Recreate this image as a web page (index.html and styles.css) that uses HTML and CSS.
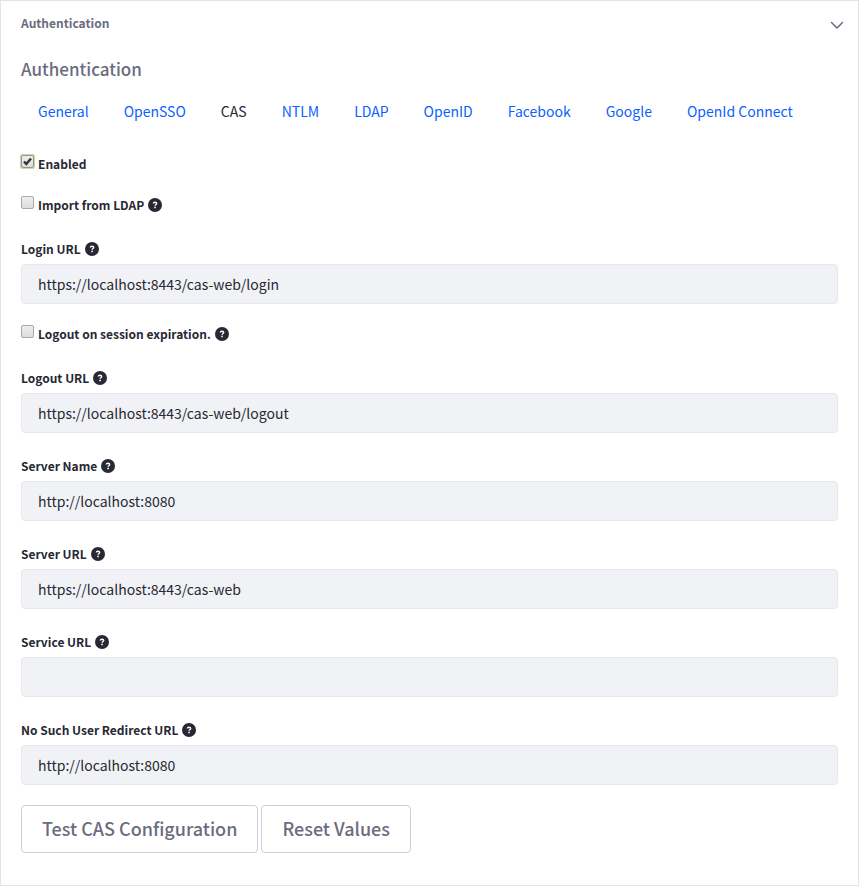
FILE: index.html
```html
<!DOCTYPE html>
<html lang="en">
<head>
<meta charset="utf-8">
<title>Authentication</title>
<link rel="stylesheet" href="styles.css">
</head>
<body>
<svg class="sprite" aria-hidden="true">
  <symbol id="help" viewBox="0 0 14 14">
    <circle cx="7" cy="7" r="7" fill="#272833"/>
    <path d="M5.300 5.500C5.400 4.600 6 4.200 7 4.200s1.700.5 1.700 1.300C8.700 6.500 7.100 6.600 7.100 7.800" fill="none" stroke="#fff" stroke-width="1.400"/>
    <circle cx="7.050" cy="9.400" r=".85" fill="#fff"/>
  </symbol>
</svg>
<main class="panel">
  <button class="panel-header" type="button" aria-expanded="true">
    <span>Authentication</span>
    <svg class="chevron" viewBox="0 0 14 8" aria-hidden="true"><path d="M1.500 1.500 7 7 12.500 1.500" fill="none" stroke="#6b6c7e" stroke-width="1.500" stroke-linecap="round" stroke-linejoin="round"/></svg>
  </button>
  <h1 class="title">Authentication</h1>
  <nav class="tabs">
    <a href="#">General</a>
    <a href="#">OpenSSO</a>
    <a href="#" class="active" aria-current="page">CAS</a>
    <a href="#">NTLM</a>
    <a href="#">LDAP</a>
    <a href="#">OpenID</a>
    <a href="#">Facebook</a>
    <a href="#">Google</a>
    <a href="#">OpenId Connect</a>
  </nav>
  <form>
    <div class="check">
      <input type="checkbox" id="enabled" class="highlighted" checked>
      <label for="enabled">Enabled</label>
    </div>
    <div class="check">
      <input type="checkbox" id="import">
      <label for="import">Import from LDAP</label>
      <svg class="help"><use href="#help"/></svg>
    </div>
    <div class="field">
      <div class="caption"><label for="login">Login URL</label><svg class="help"><use href="#help"/></svg></div>
      <input type="text" id="login" value="https://localhost:8443/cas-web/login">
    </div>
    <div class="check">
      <input type="checkbox" id="expire">
      <label for="expire">Logout on session expiration.</label>
      <svg class="help"><use href="#help"/></svg>
    </div>
    <div class="field">
      <div class="caption"><label for="logout">Logout URL</label><svg class="help"><use href="#help"/></svg></div>
      <input type="text" id="logout" value="https://localhost:8443/cas-web/logout">
    </div>
    <div class="field">
      <div class="caption"><label for="name">Server Name</label><svg class="help"><use href="#help"/></svg></div>
      <input type="text" id="name" value="http://localhost:8080">
    </div>
    <div class="field">
      <div class="caption"><label for="server">Server URL</label><svg class="help"><use href="#help"/></svg></div>
      <input type="text" id="server" value="https://localhost:8443/cas-web">
    </div>
    <div class="field">
      <div class="caption"><label for="service">Service URL</label><svg class="help"><use href="#help"/></svg></div>
      <input type="text" id="service" value="">
    </div>
    <div class="field">
      <div class="caption"><label for="redirect">No Such User Redirect URL</label><svg class="help"><use href="#help"/></svg></div>
      <input type="text" id="redirect" value="http://localhost:8080">
    </div>
    <div class="actions">
      <button type="button">Test CAS Configuration</button>
      <button type="button">Reset Values</button>
    </div>
  </form>
</main>
</body>
</html>
```
FILE: styles.css
```css
* { box-sizing: border-box; }
body {
  margin: 0;
  background: #fff;
  color: #272833;
  font-family: "Source Sans Pro", "Noto Sans CJK SC", sans-serif;
  font-size: 14px;
  line-height: 22px;
}
button, input { font: inherit; margin: 0; }
.sprite { position: absolute; width: 0; height: 0; }
.panel {
  border: 1px solid #e3e3e8;
  padding: 0 20px 32px;
  min-height: 100vh;
}
.panel-header {
  display: flex;
  width: 100%;
  justify-content: space-between;
  align-items: center;
  padding: 11px 0;
  border: 0;
  background: none;
  color: #6b6c7e;
  font-size: 12px;
  font-weight: 700;
}
.chevron { width: 14px; height: 8px; margin: 4px -6px 0 0; }
.title {
  margin: 12px 0 19px;
  color: #6b6c7e;
  font-size: 17px;
  font-weight: 500;
  line-height: 24px;
}
.tabs { display: flex; flex-wrap: wrap; padding: 0 17px; gap: 0 35px; }
.tabs a { color: #0b5fff; text-decoration: none; }
.tabs .active { color: #272833; }
form { padding-top: 12px; }
label { font-size: 12px; font-weight: 700; }
.help { width: 14px; height: 14px; }
.check { display: flex; align-items: center; margin-top: 19px; gap: 4px; }
.check input {
  appearance: none;
  width: 13px;
  height: 13px;
  margin: 0 0 5px;
  border: 1px solid #aaa;
  border-radius: 2px;
  background: linear-gradient(#eee, #dcdcdc);
}
.check .highlighted {
  border-color: #8f9688;
  box-shadow: 0 0 0 1px #c5dcaa, 0 0 1px 1px #c5dcaa;
  background: url("data:image/svg+xml,%3Csvg xmlns='http://www.w3.org/2000/svg' viewBox='0 0 11 11'%3E%3Cpath d='M2 5.500 4.300 8 9 2.500' fill='none' stroke='%23333' stroke-width='2.400'/%3E%3C/svg%3E"), linear-gradient(#eee, #dcdcdc);
}
.field { margin-top: 22px; }
.caption { display: flex; align-items: center; gap: 4px; margin-bottom: 4px; }
.field input {
  display: block;
  width: 100%;
  height: 40px;
  padding: 0 16px;
  border: 1px solid #e7e7ed;
  border-radius: 4px;
  background: #f1f2f5;
  color: #272833;
}
.actions { display: flex; gap: 3px; margin-top: 20px; }
.actions button {
  height: 48px;
  padding: 0 20px 2px;
  border: 1px solid #cdced9;
  border-radius: 4px;
  background: #fff;
  color: #6b6c7e;
  font-size: 18px;
  font-weight: 500;
}
```
